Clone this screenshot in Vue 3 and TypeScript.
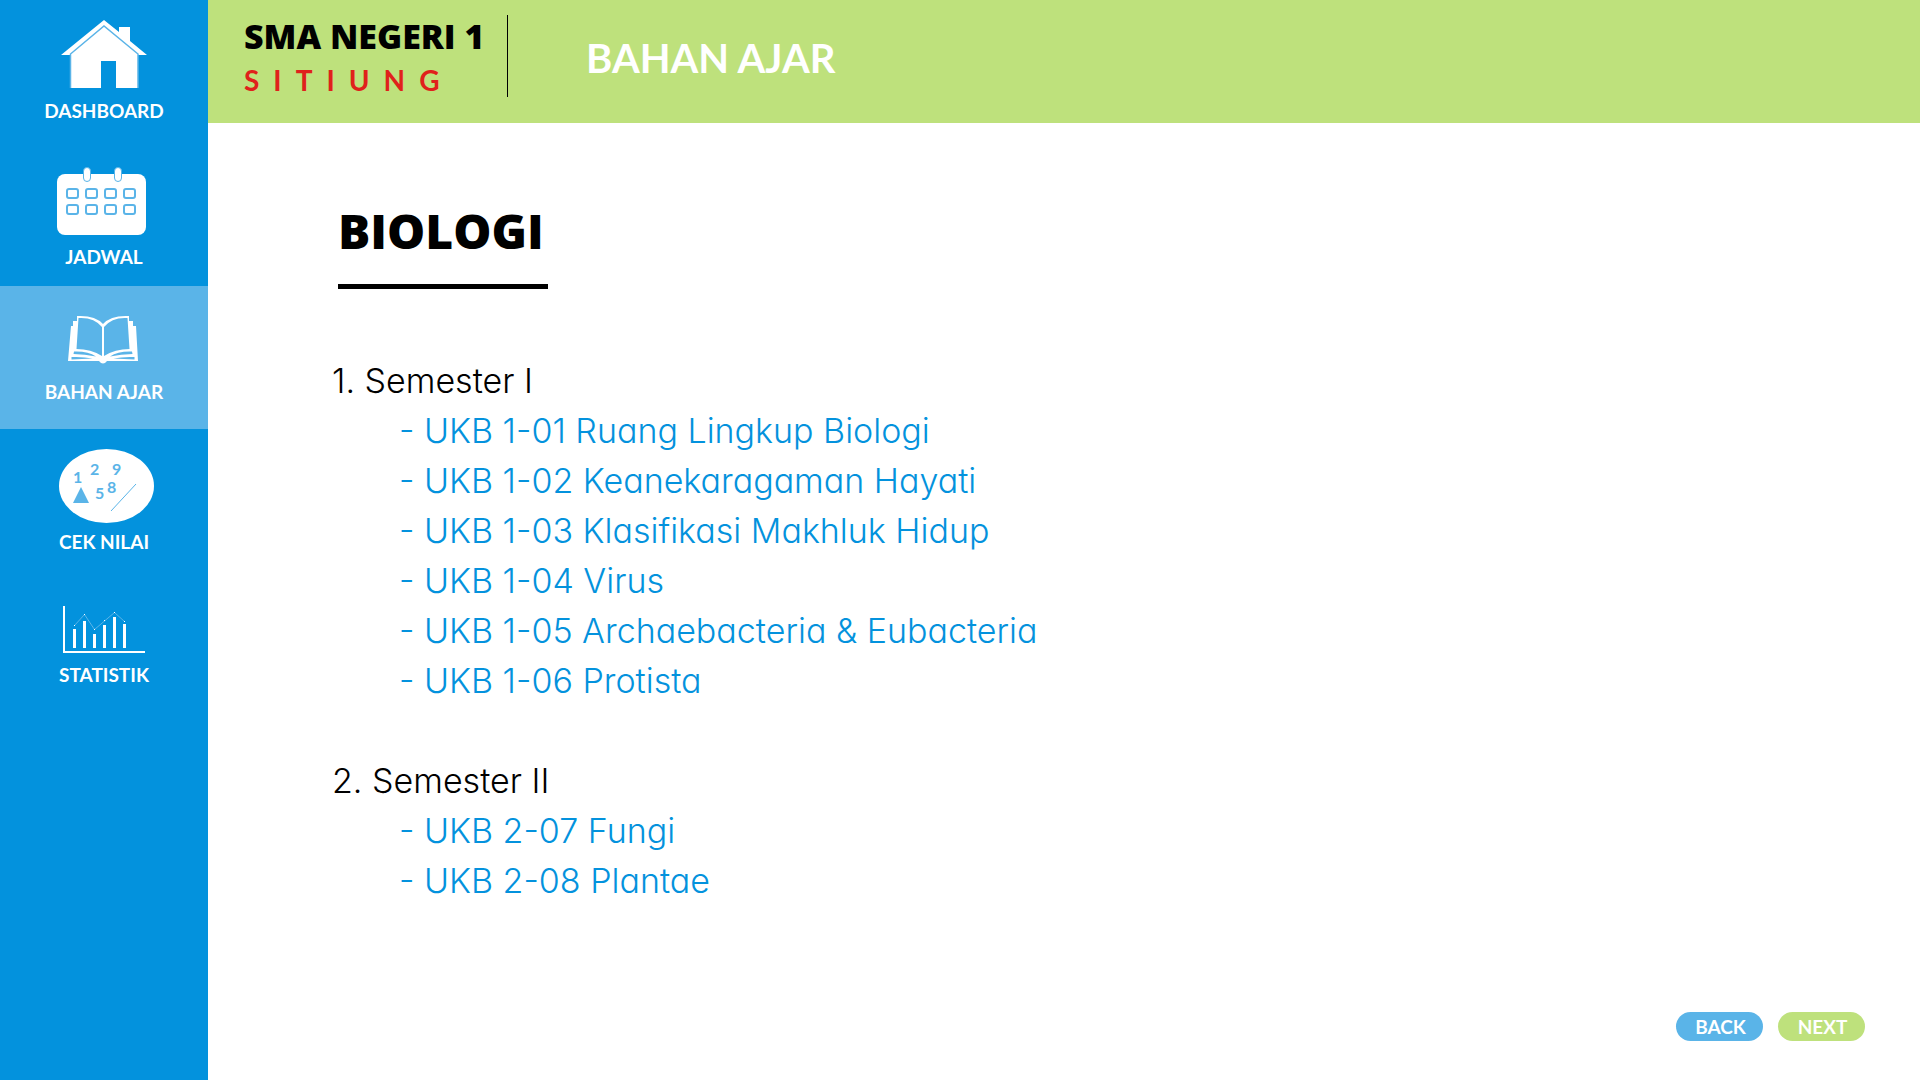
<script setup lang="ts">
interface NavItem {
  id: 'dashboard' | 'jadwal' | 'bahan' | 'nilai' | 'statistik'
  label: string
}

interface Semester {
  title: string
  units: string[]
}

const navItems: NavItem[] = [
  { id: 'dashboard', label: 'DASHBOARD' },
  { id: 'jadwal', label: 'JADWAL' },
  { id: 'bahan', label: 'BAHAN AJAR' },
  { id: 'nilai', label: 'CEK NILAI' },
  { id: 'statistik', label: 'STATISTIK' },
]

const activeId: NavItem['id'] = 'bahan'

const semesters: Semester[] = [
  {
    title: '1. Semester I',
    units: [
      'UKB 1-01 Ruang Lingkup Biologi',
      'UKB 1-02 Keanekaragaman Hayati',
      'UKB 1-03 Klasifikasi Makhluk Hidup',
      'UKB 1-04 Virus',
      'UKB 1-05 Archaebacteria & Eubacteria',
      'UKB 1-06 Protista',
    ],
  },
  {
    title: '2. Semester II',
    units: ['UKB 2-07 Fungi', 'UKB 2-08 Plantae'],
  },
]

const calendarCells = [0, 1].flatMap((row) =>
  [0, 1, 2, 3].map((col) => ({ x: 10 + col * 19, y: 22 + row * 16 })),
)

const bars = [
  { x: 10, y: 23 },
  { x: 20, y: 15 },
  { x: 30, y: 28 },
  { x: 40, y: 19 },
  { x: 50, y: 11 },
  { x: 60, y: 18 },
]
</script>

<template>
  <div class="layout">
    <nav class="sidebar" aria-label="Menu utama">
      <a
        v-for="item in navItems"
        :key="item.id"
        href="#"
        class="nav-item"
        :class="{ active: item.id === activeId }"
        :aria-current="item.id === activeId ? 'page' : undefined"
      >
        <svg v-if="item.id === 'dashboard'" width="86" height="69" viewBox="0 0 86 69" aria-hidden="true">
          <path d="M0 35 43 0l15 12V7h11v14l17 14h-9v33H9V35z" fill="#fff" />
          <path d="M9.500 68V34L43 6l34 28v34" fill="none" stroke="#5ab4e8" stroke-width="1.500" />
          <rect x="40" y="41" width="15" height="28" fill="#0392dd" />
        </svg>
        <svg v-else-if="item.id === 'jadwal'" width="95" height="68" viewBox="0 0 95 68" aria-hidden="true">
          <rect y="7" width="89" height="61" rx="8" fill="#fff" />
          <g fill="#fff" stroke="#5ab4e8">
            <rect x="26.500" y=".5" width="7" height="14" rx="3.500" />
            <rect x="57.500" y=".5" width="7" height="14" rx="3.500" />
            <rect
              v-for="cell in calendarCells"
              :key="`${cell.x}-${cell.y}`"
              :x="cell.x"
              :y="cell.y"
              width="11"
              height="9"
              rx="2"
              stroke-width="2"
            />
          </g>
        </svg>
        <svg v-else-if="item.id === 'bahan'" width="72" height="58" viewBox="0 -4 72 58" aria-hidden="true">
          <path d="M9 0Q27-1 35 8 43-1 61 0V5h4v5h3L70 45H39q-4 5-8 0H0L3 10h2V5h4z" fill="#fff" />
          <g fill="#5ab4e8">
            <path d="M10.500 2Q26 1 34 11V40Q23 33 8.500 33z" />
            <path d="M59.500 2Q44 1 36 11V40Q47 33 61.500 33z" />
            <path d="M6 35.500q14-.5 22 5Q17 38 5.500 38zM3.500 41q12-.5 21 1.500l-21 1z" />
            <path d="M64 35.500q-14-.5-22 5Q53 38 64.500 38zM66.500 41q-12-.5-21 1.500l21 1z" />
          </g>
        </svg>
        <svg v-else-if="item.id === 'nilai'" class="overflowing" width="100" height="66" viewBox="-5 4 100 66" aria-hidden="true">
          <ellipse cx="47.500" cy="36" rx="47.500" ry="37" fill="#fff" />
          <g class="digits" fill="#5ab4e8">
            <text x="14" y="33">1</text>
            <text x="31" y="25">2</text>
            <text x="53" y="25">9</text>
            <text x="36" y="49">5</text>
            <text x="48" y="43">8</text>
          </g>
          <path d="M14 53 22 37l8 16z" fill="#5ab4e8" />
          <path d="M52 61 77 34" stroke="#5ab4e8" />
        </svg>
        <svg v-else width="82" height="47" viewBox="0 0 82 47" aria-hidden="true">
          <path d="M0 0h2v45h80v2H0z" fill="#fff" />
          <rect v-for="bar in bars" :key="bar.x" :x="bar.x" :y="bar.y" width="3" :height="42 - bar.y" fill="#fff" />
          <path d="M11.500 19.500 21.500 8.500 31.500 23.500 51.500 6.500 61.500 15.500" fill="none" stroke="#5ab4e8" />
          <path d="M11 19h1v1h-1zM21 8h1v1h-1zM31 23h1v1h-1zM41 14h1v1h-1zM51 6h1v1h-1zM61 15h1v1h-1z" fill="#fff" />
        </svg>
        <span>{{ item.label }}</span>
      </a>
    </nav>

    <div class="page">
      <header class="topbar">
        <div class="school">
          <span class="school-name">SMA NEGERI 1</span>
          <span class="school-city">SITIUNG</span>
        </div>
        <h1>BAHAN AJAR</h1>
      </header>

      <main class="content">
        <h2>BIOLOGI</h2>
        <section v-for="semester in semesters" :key="semester.title" class="semester">
          <h3>{{ semester.title }}</h3>
          <ul>
            <li v-for="unit in semester.units" :key="unit">
              <a href="#">- {{ unit }}</a>
            </li>
          </ul>
        </section>
      </main>

      <footer class="pager">
        <button type="button" class="back">BACK</button>
        <button type="button" class="next">NEXT</button>
      </footer>
    </div>
  </div>
</template>

<style>
body {
  margin: 0;
}
</style>

<style scoped>
.layout {
  display: flex;
  min-height: 100vh;
  background: #fff;
  color: #000;
  font-family: Lato, sans-serif;
}

a {
  color: inherit;
  text-decoration: none;
}

.sidebar {
  flex: 0 0 208px;
  background: #0392dd;
}

.nav-item {
  display: flex;
  flex-direction: column;
  align-items: center;
  justify-content: center;
  gap: 10px;
  box-sizing: border-box;
  height: 143px;
  color: #fff;
  font-size: 19px;
  font-weight: 700;
  line-height: 24px;
}

.nav-item:not(:first-child):not(.active) {
  padding-top: 6px;
}

.nav-item.active {
  background: #5ab4e8;
}

.overflowing {
  overflow: visible;
}

.digits {
  font-size: 16px;
  font-weight: 700;
}

.page {
  display: flex;
  flex: 1;
  flex-direction: column;
}

.topbar {
  display: flex;
  align-items: flex-start;
  box-sizing: border-box;
  height: 123px;
  padding: 15px 36px;
  background: #bee17c;
}

.school {
  display: flex;
  flex-direction: column;
  box-sizing: border-box;
  width: 264px;
  height: 82px;
  border-right: 1px solid #000;
}

.school-name {
  font-family: "Open Sans", sans-serif;
  font-size: 34px;
  font-weight: 800;
  line-height: 42px;
}

.school-city {
  color: #e0211b;
  font-size: 28px;
  font-weight: 700;
  line-height: 46px;
  letter-spacing: 14px;
}

h1 {
  margin: 19px 0 0 78px;
  color: #fff;
  font-size: 40px;
  font-weight: 700;
  line-height: 48px;
}

.content {
  flex: 1;
  padding: 79px 124px 0;
}

h2 {
  width: fit-content;
  margin: 0 0 67px 6px;
  padding: 0 4px 25px 0;
  border-bottom: 5px solid #000;
  font-family: "Open Sans", sans-serif;
  font-size: 48px;
  font-weight: 800;
  line-height: 57px;
}

.semester {
  margin-bottom: 50px;
  font-family: "Century Gothic", Inter, sans-serif;
  font-size: 34px;
  font-weight: 300;
  line-height: 50px;
  font-feature-settings: "cv11";
}

h3 {
  margin: 0;
  font: inherit;
}

ul {
  margin: 0;
  padding: 0 0 0 67px;
  list-style: none;
  color: #0392dd;
}

.pager {
  display: flex;
  justify-content: flex-end;
  gap: 15px;
  padding: 0 55px 39px;
}

button {
  width: 87px;
  height: 29px;
  padding: 0 0 0 2px;
  border: 0;
  border-radius: 15px;
  color: #fff;
  font: 700 19px/29px Lato, sans-serif;
}

.back {
  background: #5ab4e8;
}

.next {
  background: #bee17c;
}
</style>
